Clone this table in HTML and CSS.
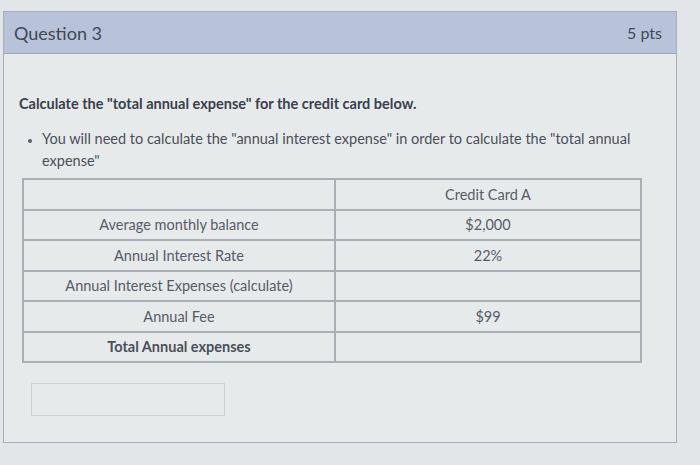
FILE: index.html
```html
<!DOCTYPE html>
<html lang="en">
<head>
<meta charset="utf-8">
<title>Question 3</title>
<link rel="stylesheet" href="styles.css">
</head>
<body>
<div class="page">
  <div class="card">
    <div class="header">
      <span class="title">Question 3</span>
      <span class="pts">5 pts</span>
    </div>
    <div class="content">
      <p class="prompt">Calculate the "total annual expense" for the credit card below.</p>
      <ul class="notes">
        <li>You will need to calculate the "annual interest expense" in order to calculate the "total annual expense"</li>
      </ul>
      <table class="data">
        <tr><td></td><td>Credit Card A</td></tr>
        <tr><td>Average monthly balance</td><td>$2,000</td></tr>
        <tr><td>Annual Interest Rate</td><td>22%</td></tr>
        <tr><td>Annual Interest Expenses (calculate)</td><td></td></tr>
        <tr><td>Annual Fee</td><td>$99</td></tr>
        <tr><td class="strong">Total Annual expenses</td><td></td></tr>
      </table>
      <div class="answer"></div>
    </div>
  </div>
</div>
</body>
</html>
```
FILE: styles.css
```css
html, body {
  margin: 0;
  padding: 0;
}
body {
  background: #e3e6e8;
  font-family: Lato, "Open Sans", sans-serif;
  color: #3d4450;
  width: 700px;
  height: 465px;
  overflow: hidden;
}
.page {
  padding: 11px 0 0 3px;
}
.card {
  width: 674px;
  background: #e7eaeb;
  border: 1px solid #a9aeb6;
  border-top: none;
  box-sizing: border-box;
}
.header {
  height: 43px;
  box-sizing: border-box;
  display: flex;
  justify-content: space-between;
  align-items: center;
  padding: 0 14px 0 10px;
  background: #b8c3da;
  border-top: 1px solid #a6afc2;
  border-bottom: 1px solid #9ca5b7;
}
.title {
  font-size: 18px;
  color: #414856;
}
.pts {
  font-size: 16px;
  color: #414856;
}
.content {
  padding: 40px 15px 26px 15px;
}
.prompt {
  margin: 0;
  font-size: 14.5px;
  font-weight: bold;
  line-height: 20px;
  color: #3a404b;
}
.notes {
  margin: 14px 0 6px 0;
  padding-left: 23px;
  font-size: 14.5px;
  line-height: 22px;
  color: #4a505a;
}
.notes li::marker {
  font-size: 11px;
  color: #5a606a;
}
.data {
  margin-left: 3px;
  width: 620px;
  border-collapse: collapse;
  table-layout: fixed;
}
.data td {
  border: 2px solid #aaaeb5;
  height: 28.5px;
  padding: 0;
  text-align: center;
  font-size: 14.5px;
  color: #565c67;
}
.data td:first-child {
  width: 310px;
}
.data .strong {
  font-weight: bold;
  color: #4a505a;
}
.answer {
  margin: 20px 0 0 12px;
  width: 194px;
  height: 33px;
  box-sizing: border-box;
  border: 1px solid #cdd0d5;
}
```
